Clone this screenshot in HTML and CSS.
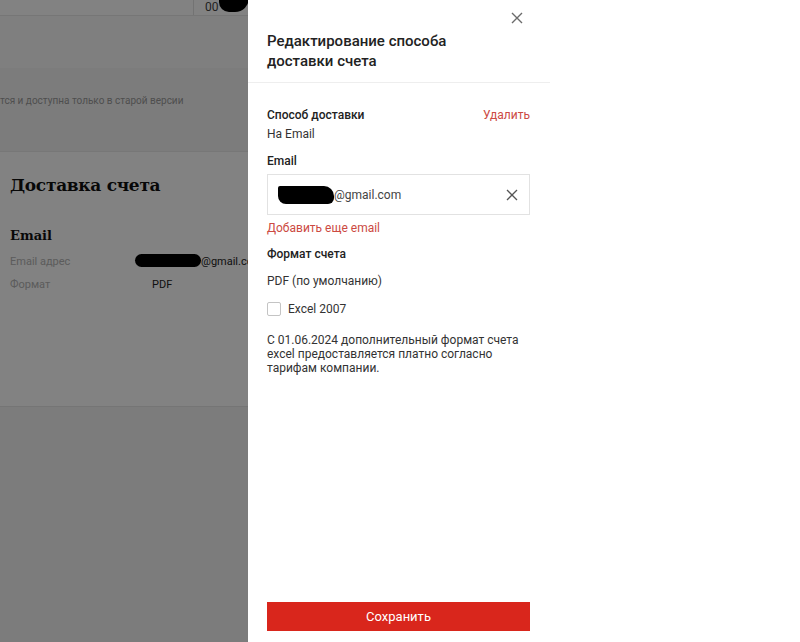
FILE: index.html
```html
<!DOCTYPE html>
<html lang="ru">
<head>
<meta charset="utf-8">
<title>Доставка счета</title>
<link rel="stylesheet" href="styles.css">
</head>
<body>
<div class="page">
  <div class="topbar">
    <div class="topcell"><span class="topnum">00</span><span class="blob blob-top"></span></div>
  </div>
  <div class="gap"></div>
  <div class="notice"><span class="notice-text">тся и доступна только в старой версии</span></div>
  <section class="card">
    <h2 class="card-title">Доставка счета</h2>
    <h3 class="card-sub">Email</h3>
    <div class="kv">
      <span class="k">Email адрес</span>
      <span class="v"><span class="blob blob-left"></span>@gmail.com</span>
    </div>
    <div class="kv">
      <span class="k">Формат</span>
      <span class="v">PDF</span>
    </div>
  </section>
  <div class="rest"></div>
</div>

<div class="overlay"></div>

<aside class="drawer">
  <div class="drawer-col">
    <header class="drawer-head">
      <h1 class="drawer-title">Редактирование способа<br>доставки счета</h1>
      <button class="close" aria-label="Закрыть">
        <svg width="12" height="12" viewBox="0 0 12 12"><path d="M1 1L11 11M11 1L1 11" stroke="#6b6b6b" stroke-width="1.4" fill="none"/></svg>
      </button>
    </header>
    <div class="drawer-body">
      <div class="row-between">
        <span class="label">Способ доставки</span>
        <a class="link" href="#">Удалить</a>
      </div>
      <div class="text t-na">На Email</div>
      <div class="label l-email">Email</div>
      <div class="input">
        <span class="input-val"><span class="blob blob-input"></span>@gmail.com</span>
        <svg width="12" height="12" viewBox="0 0 12 12"><path d="M1 1L11 11M11 1L1 11" stroke="#555" stroke-width="1.3" fill="none"/></svg>
      </div>
      <a class="link add" href="#">Добавить еще email</a>
      <div class="label l-format">Формат счета</div>
      <div class="text t-pdf">PDF (по умолчанию)</div>
      <label class="check"><span class="box"></span>Excel 2007</label>
      <p class="note">С 01.06.2024 дополнительный формат счета excel предоставляется платно согласно тарифам компании.</p>
    </div>
    <footer class="drawer-foot">
      <button class="save">Сохранить</button>
    </footer>
  </div>
</aside>
</body>
</html>
```

FILE: styles.css
```css
* { box-sizing: border-box; }
html, body { margin: 0; padding: 0; height: 100%; }
body {
  font-family: Roboto, "Noto Sans", sans-serif;
  background: #ececec;
  overflow: hidden;
}

/* underlying page */
.page { width: 800px; height: 642px; display: flex; flex-direction: column; }
.topbar { height: 16px; background: #fff; border-bottom: 1px solid #e8e8e8; display: flex; overflow: hidden; }
.topcell { margin-left: 193px; border-left: 1px solid #e2e2e2; flex: 1; padding-left: 11px; display: flex; align-items: flex-start; }
.topnum { font-size: 12px; line-height: 12px; color: #444; margin-top: 1px; }
.blob { display: inline-block; background: #000; }
.blob-top { width: 30px; height: 14px; border-radius: 0 0 14px 10px; margin-top: -2px; }
.gap { height: 52px; background: #fafafa; }
.notice { height: 84px; background: #f4f4f4; padding-top: 26px; border-bottom: 1px solid #e9e9e9; }
.notice-text { display: block; font-size: 10px; line-height: 14px; color: #9a9a9a; }
.card { height: 255px; background: #fff; border-bottom: 1px solid #e6e6e6; padding: 22px 10px 0; }
.card-title { margin: 0; font-family: "DejaVu Serif", serif; font-weight: bold; font-size: 17px; line-height: 22px; color: #111; letter-spacing: -0.3px; }
.card-sub { margin: 31px 0 0; font-family: "DejaVu Serif", serif; font-weight: bold; font-size: 13px; line-height: 18px; color: #111; }
.kv { display: flex; font-size: 11px; line-height: 16px; margin-top: 9px; }
.kv + .kv { margin-top: 7px; }
.k { width: 142px; color: #b4b4b4; }
.v { color: #222; }
.blob-left { width: 66px; height: 13px; border-radius: 7px; vertical-align: -2px; margin-left: -17px; }
.rest { flex: 1; background: #f3f3f3; }

.overlay { position: fixed; inset: 0; background: rgba(0, 0, 0, 0.49); }

/* drawer */
.drawer { position: fixed; top: 0; bottom: 0; left: 248px; right: 0; background: #fff; }
.drawer-col { width: 302px; height: 100%; display: flex; flex-direction: column; }
.drawer-head { position: relative; padding: 31px 20px 11px 19px; border-bottom: 1px solid #eeeeee; }
.drawer-title { margin: 0; font-size: 15px; font-weight: 500; line-height: 20px; color: #222; }
.close { position: absolute; top: 12px; right: 27px; width: 12px; height: 12px; padding: 0; border: 0; background: none; display: flex; }
.drawer-body { padding: 23px 20px 0 19px; font-size: 12px; line-height: 18px; color: #333; }
.row-between { display: flex; justify-content: space-between; }
.label { font-weight: 500; color: #222; }
.link { color: #cc4a42; text-decoration: none; }
.t-na { margin-top: 1px; }
.l-email { margin-top: 9px; }
.input { margin-top: 4px; height: 41px; border: 1px solid #e2e2e2; display: flex; align-items: center; justify-content: space-between; padding: 0 11px 0 10px; font-size: 12px; color: #444; }
.input-val { display: flex; align-items: center; }
.blob-input { width: 56px; height: 18px; border-radius: 2px 10px 6px 8px; }
.add { display: block; margin-top: 4px; }
.l-format { margin-top: 8px; }
.t-pdf { margin-top: 9px; }
.check { margin-top: 10px; display: flex; align-items: center; gap: 7px; }
.box { width: 14px; height: 14px; border: 1px solid #c4c4c4; border-radius: 2px; }
.note { margin: 15px 0 0; line-height: 14px; }
.drawer-foot { margin-top: auto; padding: 0 20px 11px 19px; }
.save { width: 100%; height: 29px; border: 0; background: #d9261c; color: #fff; font-family: inherit; font-size: 13px; padding: 0; }
```
